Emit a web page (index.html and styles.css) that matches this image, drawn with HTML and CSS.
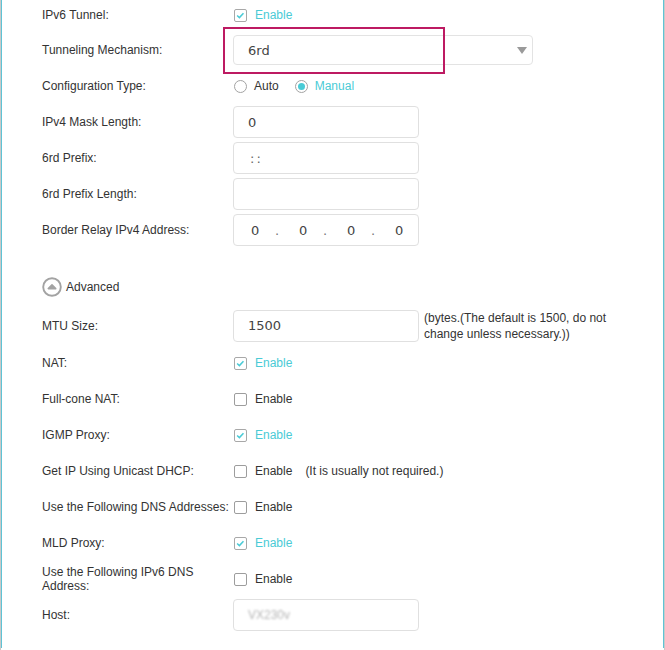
FILE: index.html
```html
<!DOCTYPE html>
<html>
<head>
<meta charset="utf-8">
<link rel="stylesheet" href="styles.css">
</head>
<body>
<div class="frame">
  <div class="panel">
    <div class="rows">
      <div class="row row-first">
        <div class="label">IPv6 Tunnel:</div>
        <div class="ctrl"><span class="cb on"><svg viewBox="0 0 13 13" width="11" height="11"><polyline points="2.5,6.5 5.2,9 10,3.8" fill="none" stroke="#4acbd6" stroke-width="1.8"/></svg></span><span class="opt on">Enable</span></div>
      </div>
      <div class="row">
        <div class="label">Tunneling Mechanism:</div>
        <div class="ctrl">
          <div class="select-wrap">
            <div class="select"><span class="val">6rd</span><span class="arrow"></span></div>
            <div class="highlight"></div>
          </div>
        </div>
      </div>
      <div class="row">
        <div class="label">Configuration Type:</div>
        <div class="ctrl"><span class="rb"></span><span class="opt">Auto</span><span class="rb on gap"><span class="dot"></span></span><span class="opt on">Manual</span></div>
      </div>
      <div class="row">
        <div class="label">IPv4 Mask Length:</div>
        <div class="ctrl"><div class="input"><span class="val">0</span></div></div>
      </div>
      <div class="row">
        <div class="label">6rd Prefix:</div>
        <div class="ctrl"><div class="input"><span class="val colons">::</span></div></div>
      </div>
      <div class="row">
        <div class="label">6rd Prefix Length:</div>
        <div class="ctrl"><div class="input"></div></div>
      </div>
      <div class="row">
        <div class="label">Border Relay IPv4 Address:</div>
        <div class="ctrl"><div class="input ip"><span class="seg">0</span><span class="seg dotc">.</span><span class="seg">0</span><span class="seg dotc">.</span><span class="seg">0</span><span class="seg dotc">.</span><span class="seg last">0</span></div></div>
      </div>

      <div class="row row-adv">
        <div class="adv"><svg class="adv-icon" viewBox="0 0 20 20" width="20" height="20"><circle cx="10" cy="10" r="8.8" fill="#fff" stroke="#a3a3a3" stroke-width="1.9"/><path d="M6.3 11.6 L10 7.9 L13.7 11.6 Z" fill="#a3a3a3" stroke="#a3a3a3" stroke-width="1.6" stroke-linejoin="round"/></svg><span>Advanced</span></div>
      </div>

      <div class="row row-mtu">
        <div class="label">MTU Size:</div>
        <div class="ctrl top"><div class="input"><span class="val">1500</span></div><div class="note">(bytes.(The default is 1500, do not change unless necessary.))</div></div>
      </div>
      <div class="row">
        <div class="label">NAT:</div>
        <div class="ctrl"><span class="cb on"><svg viewBox="0 0 13 13" width="11" height="11"><polyline points="2.5,6.5 5.2,9 10,3.8" fill="none" stroke="#4acbd6" stroke-width="1.8"/></svg></span><span class="opt on">Enable</span></div>
      </div>
      <div class="row">
        <div class="label">Full-cone NAT:</div>
        <div class="ctrl"><span class="cb"></span><span class="opt">Enable</span></div>
      </div>
      <div class="row">
        <div class="label">IGMP Proxy:</div>
        <div class="ctrl"><span class="cb on"><svg viewBox="0 0 13 13" width="11" height="11"><polyline points="2.5,6.5 5.2,9 10,3.8" fill="none" stroke="#4acbd6" stroke-width="1.8"/></svg></span><span class="opt on">Enable</span></div>
      </div>
      <div class="row">
        <div class="label">Get IP Using Unicast DHCP:</div>
        <div class="ctrl"><span class="cb"></span><span class="opt">Enable</span><span class="hint">(It is usually not required.)</span></div>
      </div>
      <div class="row">
        <div class="label">Use the Following DNS Addresses:</div>
        <div class="ctrl"><span class="cb"></span><span class="opt">Enable</span></div>
      </div>
      <div class="row">
        <div class="label">MLD Proxy:</div>
        <div class="ctrl"><span class="cb on"><svg viewBox="0 0 13 13" width="11" height="11"><polyline points="2.5,6.5 5.2,9 10,3.8" fill="none" stroke="#4acbd6" stroke-width="1.8"/></svg></span><span class="opt on">Enable</span></div>
      </div>
      <div class="row">
        <div class="label wrap">Use the Following IPv6 DNS Address:</div>
        <div class="ctrl"><span class="cb"></span><span class="opt">Enable</span></div>
      </div>
      <div class="row">
        <div class="label">Host:</div>
        <div class="ctrl"><div class="input"><span class="val blurred">VX230v</span></div></div>
      </div>
    </div>
  </div>
</div>
</body>
</html>
```
FILE: styles.css
```css
html, body {
  margin: 0;
  padding: 0;
  background: #fff;
}
body {
  font-family: "Liberation Sans", Arial, sans-serif;
  font-size: 12px;
  color: #333;
}
.frame {
  width: 665px;
  height: 650px;
  box-sizing: border-box;
  border-left: 1px solid #c9c9c9;
  border-right: 1px solid #c9c9c9;
  overflow: hidden;
}
.panel {
  height: 100%;
  box-sizing: border-box;
  border-left: 1px solid #5fc3d5;
  border-right: 1px solid #5fc3d5;
  padding-left: 40px;
}
.rows {
  margin-top: -2px;
}
.row {
  display: flex;
  align-items: center;
  min-height: 36px;
}
.row-first { min-height: 34px; }
.row-adv {
  margin-top: 20px;
  min-height: 38px;
}
.row-mtu { min-height: 39px; }
.label {
  width: 191px;
  flex: none;
  line-height: 14px;
}
.ctrl {
  display: flex;
  align-items: center;
}
.ctrl.top { align-items: flex-start; }
.cb {
  width: 11px;
  height: 11px;
  border: 1px solid #9d9d9d;
  border-radius: 2px;
  background: #fff;
  margin-left: 1px;
  display: flex;
  align-items: center;
  justify-content: center;
}
.cb.on { border-color: #a8a8a8; }
.opt {
  margin-left: 8px;
  color: #333;
}
.opt.on { color: #4acbd6; }
.rb {
  width: 11px;
  height: 11px;
  border: 1px solid #a3a3a3;
  border-radius: 50%;
  margin-left: 1px;
  display: flex;
  align-items: center;
  justify-content: center;
}
.rb + .opt { margin-left: 7px; }
.rb.gap { margin-left: 16px; }
.rb .dot {
  width: 7px;
  height: 7px;
  border-radius: 50%;
  background: #4acbd6;
}
.hint {
  margin-left: 13px;
}
.select-wrap {
  position: relative;
}
.select {
  width: 300px;
  height: 30px;
  box-sizing: border-box;
  border: 1px solid #e3e3e3;
  border-radius: 4px;
  padding: 0 5px 0 14px;
  display: flex;
  align-items: center;
  justify-content: space-between;
}
.val {
  font-family: "DejaVu Sans", Verdana, sans-serif;
  font-size: 13px;
  color: #444;
}
.arrow {
  width: 0;
  height: 0;
  border-left: 5px solid transparent;
  border-right: 5px solid transparent;
  border-top: 7px solid #9a9a9a;
}
.highlight {
  position: absolute;
  left: -10px;
  top: -8px;
  width: 222px;
  height: 47px;
  box-sizing: border-box;
  border: 2px solid #bd1a62;
}
.input {
  width: 186px;
  height: 32px;
  box-sizing: border-box;
  border: 1px solid #e0e0e0;
  border-radius: 4px;
  padding-left: 14px;
  display: flex;
  align-items: center;
  flex: none;
}
.colons {
  letter-spacing: 2px;
  color: #666;
  padding-left: 2px;
}
.input.ip {
  padding-left: 17px;
}
.seg {
  width: 24px;
  flex: none;
  font-family: "DejaVu Sans", Verdana, sans-serif;
  font-size: 13px;
  color: #444;
}
.seg.dotc { color: #777; }
.seg.last { width: auto; }
.blurred {
  color: #b5b5b5;
  filter: blur(1px);
  font-family: "Liberation Sans", Arial, sans-serif;
  font-size: 12px;
}
.note {
  width: 190px;
  margin-left: 5px;
  line-height: 16px;
  margin-top: 0;
}
.adv {
  display: flex;
  align-items: center;
}
.adv-icon {
  display: block;
  margin-left: 0;
}
.adv span {
  margin-left: 4px;
}
```
